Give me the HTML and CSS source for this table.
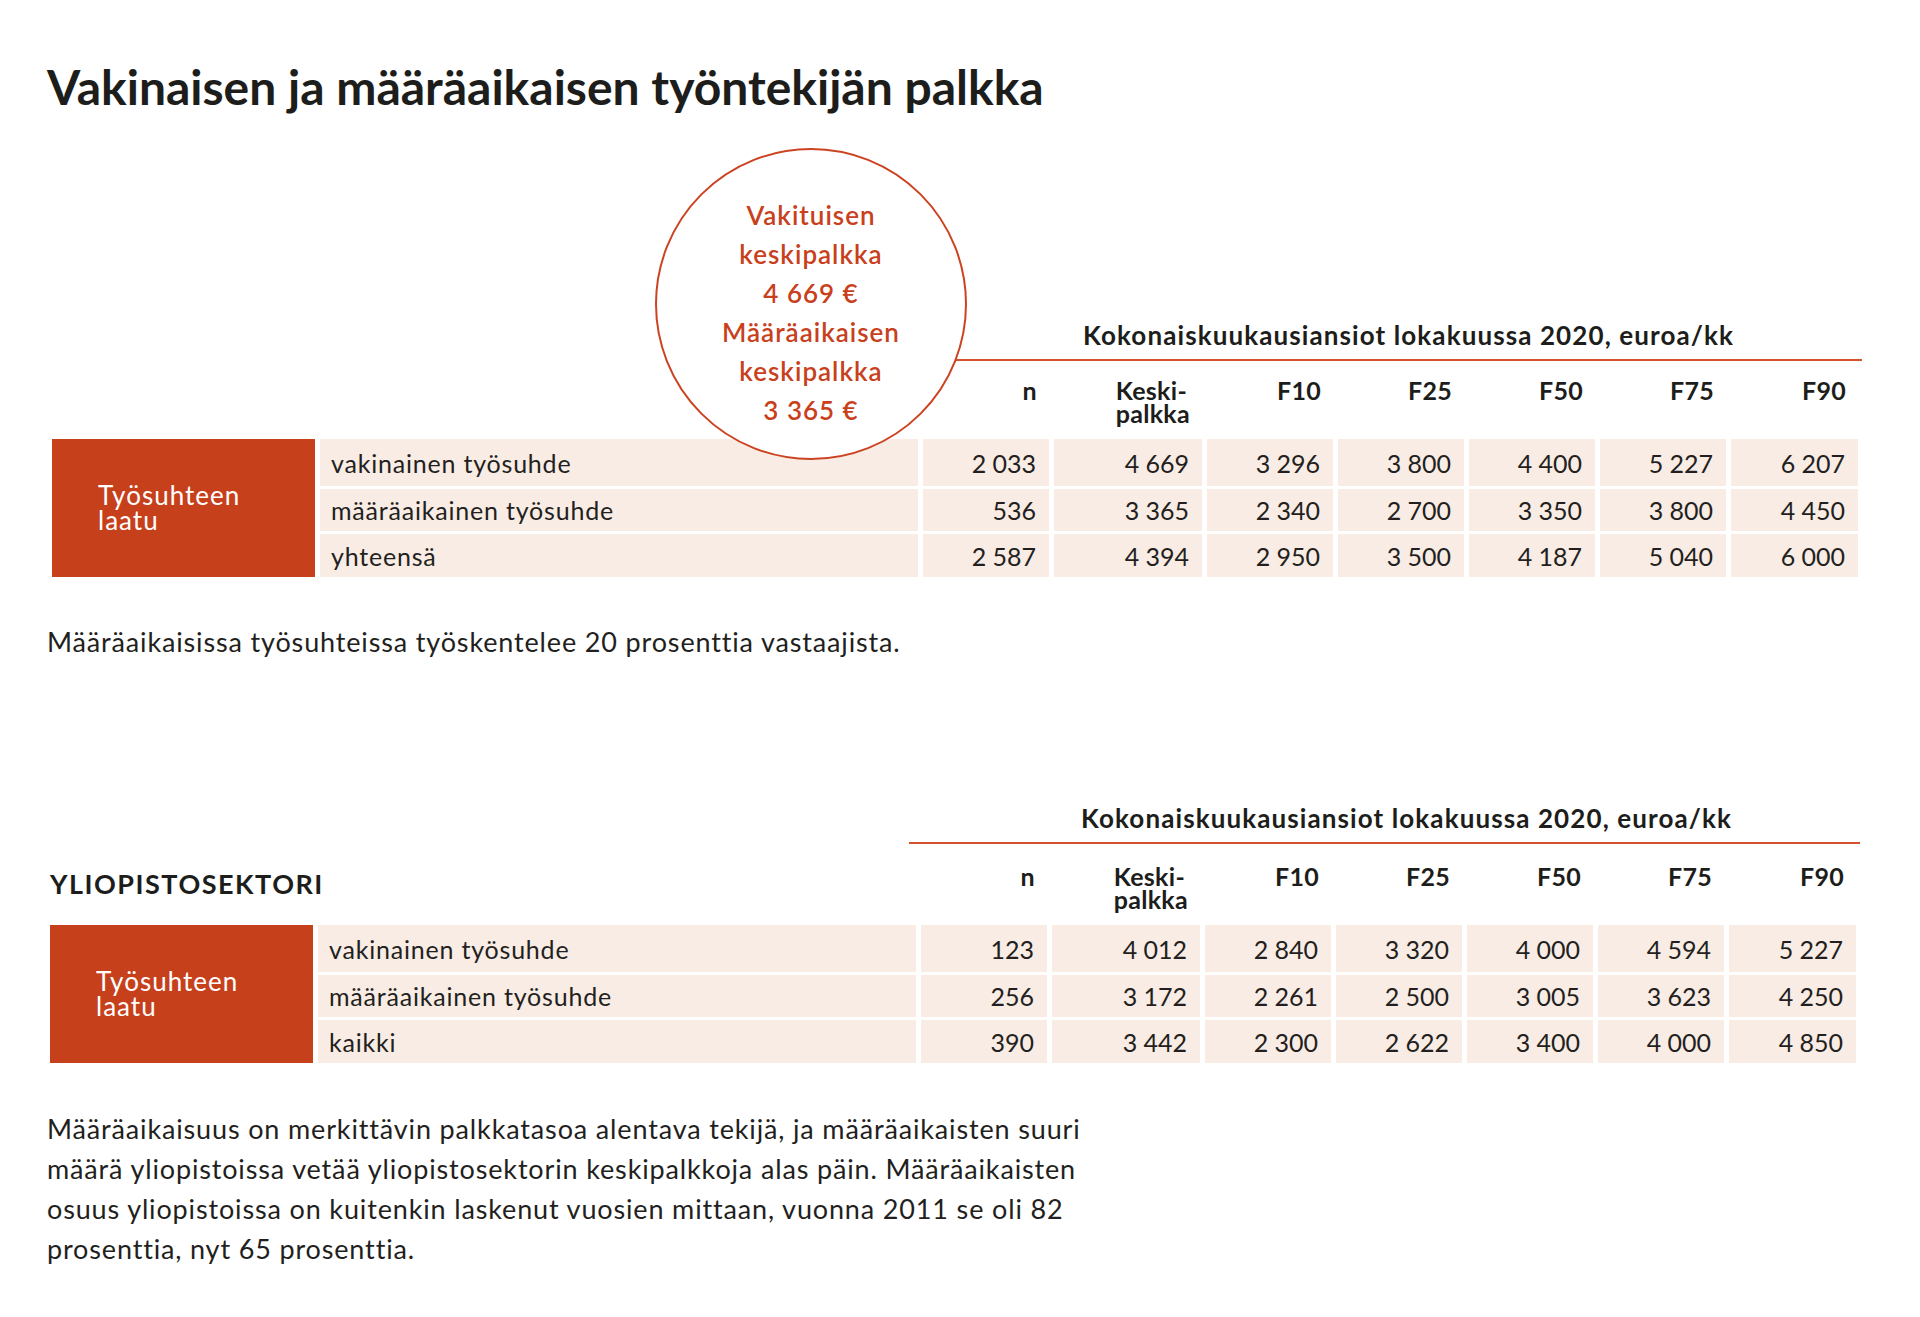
FILE: index.html
```html
<!DOCTYPE html>
<html lang="fi">
<head>
<meta charset="utf-8">
<title>Vakinaisen ja määräaikaisen työntekijän palkka</title>
<link rel="stylesheet" href="styles.css">
</head>
<body>
<main class="page">
  <h1 class="title">Vakinaisen ja määräaikaisen työntekijän palkka</h1>

  <section class="block block--first">
    <div class="bubble">
      <div class="bubble-text">Vakituisen<br>keskipalkka<br>4&#8239;669 €<br>Määräaikaisen<br>keskipalkka<br>3&#8239;365 €</div>
    </div>
    <div class="block-title">Kokonaiskuukausiansiot lokakuussa 2020, euroa/kk</div>
    <div class="grid grid-head">
      <div class="hcell hcell--blank"></div>
      <div class="hcell">n</div>
      <div class="hcell"><span class="hstack">Keski-<br>palkka</span></div>
      <div class="hcell">F10</div>
      <div class="hcell">F25</div>
      <div class="hcell">F50</div>
      <div class="hcell">F75</div>
      <div class="hcell">F90</div>
    </div>
    <div class="grid grid-body">
      <div class="cat">Työsuhteen<br>laatu</div>
      <div class="cell cell--label">vakinainen työsuhde</div>
      <div class="cell">2&#8239;033</div><div class="cell">4&#8239;669</div><div class="cell">3&#8239;296</div><div class="cell">3&#8239;800</div><div class="cell">4&#8239;400</div><div class="cell">5&#8239;227</div><div class="cell">6&#8239;207</div>
      <div class="cell cell--label">määräaikainen työsuhde</div>
      <div class="cell">536</div><div class="cell">3&#8239;365</div><div class="cell">2&#8239;340</div><div class="cell">2&#8239;700</div><div class="cell">3&#8239;350</div><div class="cell">3&#8239;800</div><div class="cell">4&#8239;450</div>
      <div class="cell cell--label">yhteensä</div>
      <div class="cell">2&#8239;587</div><div class="cell">4&#8239;394</div><div class="cell">2&#8239;950</div><div class="cell">3&#8239;500</div><div class="cell">4&#8239;187</div><div class="cell">5&#8239;040</div><div class="cell">6&#8239;000</div>
    </div>
  </section>

  <p class="note">Määräaikaisissa työsuhteissa työskentelee 20 prosenttia vastaajista.</p>

  <section class="block block--second">
    <div class="block-title">Kokonaiskuukausiansiot lokakuussa 2020, euroa/kk</div>
    <div class="grid grid-head grid-head--tall">
      <div class="hcell hcell--sector">YLIOPISTOSEKTORI</div>
      <div class="hcell">n</div>
      <div class="hcell"><span class="hstack">Keski-<br>palkka</span></div>
      <div class="hcell">F10</div>
      <div class="hcell">F25</div>
      <div class="hcell">F50</div>
      <div class="hcell">F75</div>
      <div class="hcell">F90</div>
    </div>
    <div class="grid grid-body">
      <div class="cat">Työsuhteen<br>laatu</div>
      <div class="cell cell--label">vakinainen työsuhde</div>
      <div class="cell">123</div><div class="cell">4&#8239;012</div><div class="cell">2&#8239;840</div><div class="cell">3&#8239;320</div><div class="cell">4&#8239;000</div><div class="cell">4&#8239;594</div><div class="cell">5&#8239;227</div>
      <div class="cell cell--label">määräaikainen työsuhde</div>
      <div class="cell">256</div><div class="cell">3&#8239;172</div><div class="cell">2&#8239;261</div><div class="cell">2&#8239;500</div><div class="cell">3&#8239;005</div><div class="cell">3&#8239;623</div><div class="cell">4&#8239;250</div>
      <div class="cell cell--label">kaikki</div>
      <div class="cell">390</div><div class="cell">3&#8239;442</div><div class="cell">2&#8239;300</div><div class="cell">2&#8239;622</div><div class="cell">3&#8239;400</div><div class="cell">4&#8239;000</div><div class="cell">4&#8239;850</div>
    </div>
  </section>

  <p class="note note--long">Määräaikaisuus on merkittävin palkkatasoa alentava tekijä, ja määräaikaisten suuri määrä yliopistoissa vetää yliopistosektorin keskipalkkoja alas päin. Määräaikaisten osuus yliopistoissa on kuitenkin laskenut vuosien mittaan, vuonna 2011 se oli 82 prosenttia, nyt 65 prosenttia.</p>
</main>
</body>
</html>
```

FILE: styles.css
```css
html, body {
  margin: 0;
  padding: 0;
  background: #ffffff;
}

body {
  font-family: Lato, "Open Sans", "Liberation Sans", sans-serif;
  color: #231f20;
}

.page {
  padding-left: 47px;
  width: 1873px;
}

.title {
  margin: 0;
  padding-top: 59px;
  font-size: 48px;
  line-height: 56px;
  font-weight: 700;
  letter-spacing: 0;
  color: #1d1d1b;
}

.block {
  position: relative;
  width: 1810px;
}

.block--first {
  margin-top: 205px;
  margin-left: 5px;
}

.block--second {
  margin-top: 141px;
  margin-left: 3px;
}

.block-title {
  margin-left: 859px;
  width: 951px;
  box-sizing: border-box;
  padding: 0 0 9px 44px;
  border-bottom: 2px solid #d4512c;
  text-align: center;
  font-size: 26px;
  line-height: 30px;
  font-weight: 700;
  letter-spacing: 1.1px;
  color: #1d1d1b;
}

.bubble {
  position: absolute;
  left: 603px;
  top: -172px;
  width: 312px;
  height: 312px;
  box-sizing: border-box;
  border: 2px solid #cc4322;
  border-radius: 50%;
  background: #ffffff;
  display: flex;
  align-items: center;
  justify-content: center;
  padding-top: 18px;
  z-index: 2;
}

.bubble-text {
  text-align: center;
  color: #c8401c;
  font-size: 26px;
  line-height: 39px;
  font-weight: 600;
  letter-spacing: 1px;
}

.grid {
  display: grid;
  grid-template-columns: 263px 598px 126px 148px 126px 126px 126px 126px 127px;
  column-gap: 5px;
}

.grid-head {
  height: 78px;
}

.grid-head--tall {
  height: 81px;
}

.hcell {
  box-sizing: border-box;
  padding: 18px 12px 0 0;
  text-align: right;
  font-size: 25px;
  line-height: 23px;
  font-weight: 700;
  letter-spacing: 0.3px;
  color: #1d1d1b;
}

.grid-head--tall .hcell {
  padding-top: 21px;
}

.hcell--blank,
.hcell--sector {
  grid-column: 1 / 3;
}

.grid-head--tall .hcell--sector {
  padding: 25px 0 0 0;
  text-align: left;
  font-size: 27px;
  line-height: 30px;
  letter-spacing: 1.5px;
}

.hstack {
  display: inline-block;
  text-align: left;
}

.grid-body {
  grid-template-rows: 47px 42px 43px;
  row-gap: 3px;
}

.cat {
  grid-row: 1 / 4;
  grid-column: 1;
  background: #c7401c;
  color: #ffffff;
  display: flex;
  align-items: center;
  padding-left: 46px;
  font-size: 26px;
  line-height: 25px;
  letter-spacing: 1px;
}

.cell {
  background: #f8ece4;
  display: flex;
  align-items: center;
  justify-content: flex-end;
  padding-right: 13px;
  font-size: 25px;
  color: #231f20;
}

.cell--label {
  justify-content: flex-start;
  padding-right: 0;
  padding-left: 11px;
  letter-spacing: 0.8px;
}

.note {
  margin: 45px 0 0 0;
  font-size: 27px;
  line-height: 40px;
  letter-spacing: 0.85px;
  color: #231f20;
}

.note--long {
  margin-top: 46px;
  width: 1080px;
}
```
